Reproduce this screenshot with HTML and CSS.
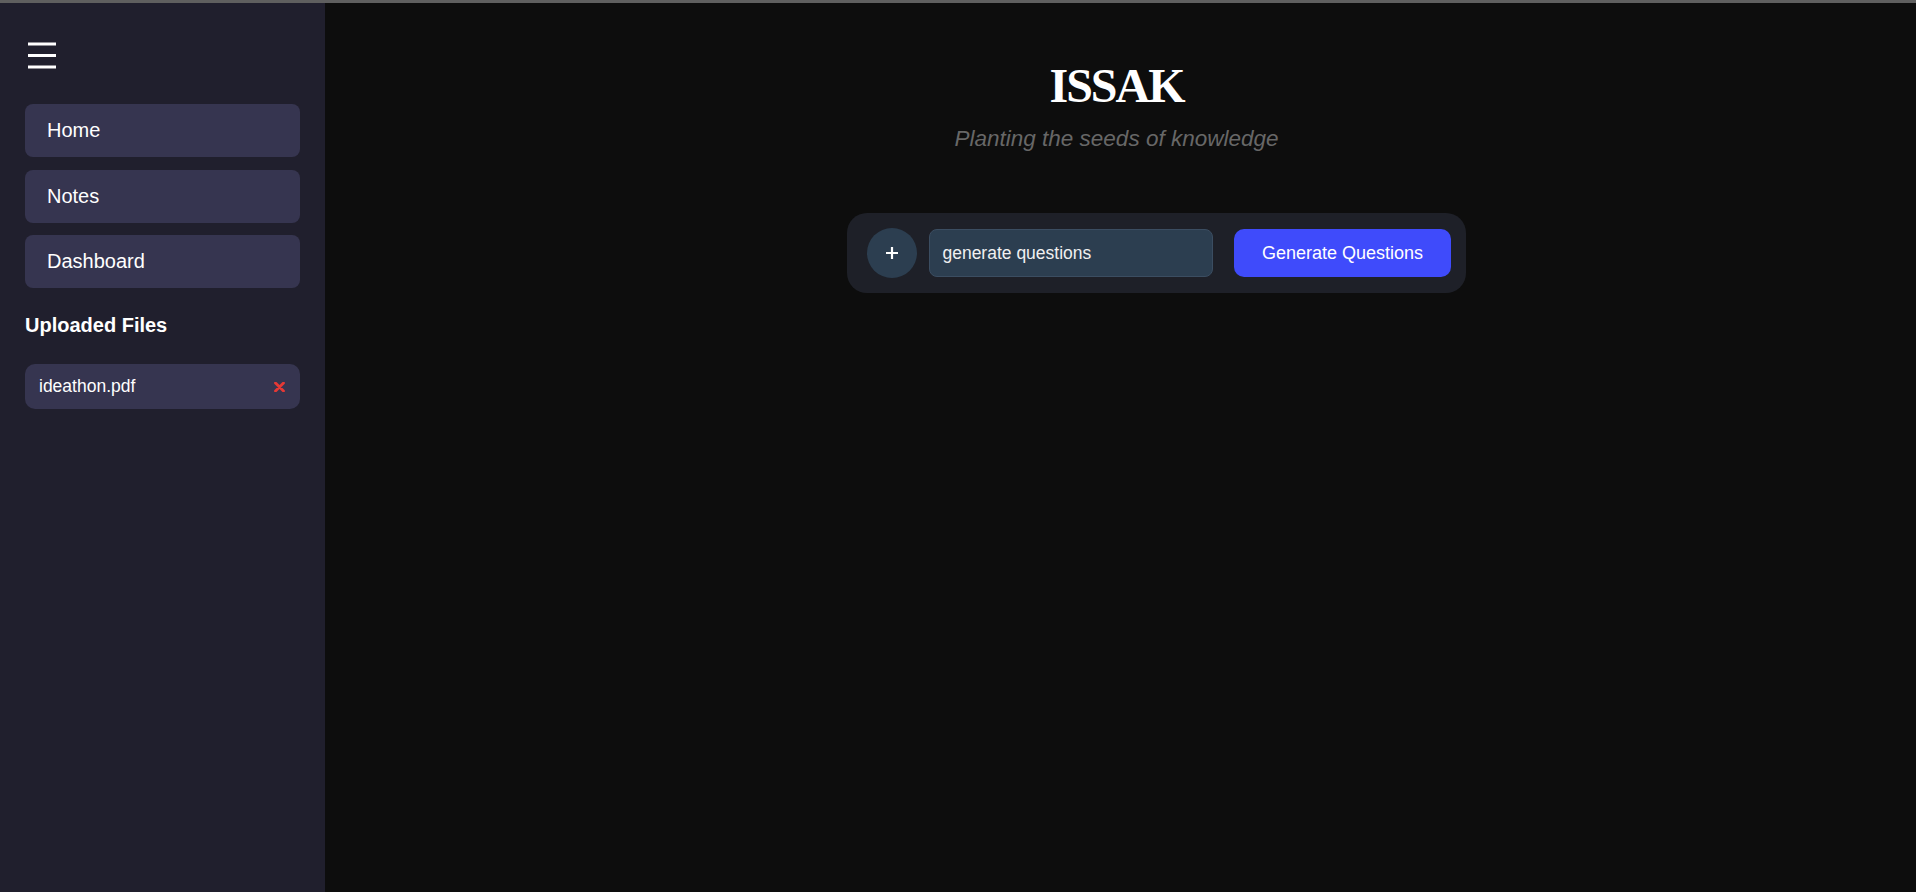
FILE: index.html
```html
<!DOCTYPE html>
<html lang="en">
<head>
<meta charset="utf-8">
<title>ISSAK</title>
<link rel="stylesheet" href="styles.css">
</head>
<body>
<div class="topbar"></div>
<div class="app">
  <aside class="sidebar">
    <button class="menu-btn" aria-label="Menu">
      <svg width="28" height="27" viewBox="0 0 28 27">
        <rect x="0" y="0.5" width="28" height="3" fill="#ffffff"/>
        <rect x="0" y="12" width="28" height="3" fill="#ffffff"/>
        <rect x="0" y="23.5" width="28" height="3" fill="#ffffff"/>
      </svg>
    </button>
    <nav class="nav">
      <a class="nav-item">Home</a>
      <a class="nav-item">Notes</a>
      <a class="nav-item">Dashboard</a>
    </nav>
    <h3 class="files-title">Uploaded Files</h3>
    <ul class="file-list">
      <li class="file-item">
        <span class="file-name">ideathon.pdf</span>
        <svg class="file-remove" width="11" height="10" viewBox="0 0 11 10">
          <path d="M1.5 1 L9.5 9 M9.5 1 L1.5 9" stroke="#e53935" stroke-width="2.8" stroke-linecap="round"/>
        </svg>
      </li>
    </ul>
  </aside>
  <main class="main">
    <h1 class="title">ISSAK</h1>
    <p class="subtitle">Planting the seeds of knowledge</p>
    <div class="prompt">
      <button class="add-btn" aria-label="Add">
        <svg width="14" height="14" viewBox="0 0 14 14">
          <path d="M7 1 V13 M1 7 H13" stroke="#ffffff" stroke-width="2.2"/>
        </svg>
      </button>
      <div class="prompt-input">generate questions</div>
      <button class="gen-btn">Generate Questions</button>
    </div>
  </main>
</div>
</body>
</html>
```

FILE: styles.css
```css
* {
  box-sizing: border-box;
}

html, body {
  margin: 0;
  padding: 0;
  height: 100%;
  background: #0d0d0d;
  font-family: "Liberation Sans", Arial, sans-serif;
  color: #ffffff;
  overflow: hidden;
}

.topbar {
  height: 3px;
  background: #5f5f5f;
}

.app {
  display: flex;
  height: 889px;
}

.sidebar {
  width: 325px;
  flex: 0 0 325px;
  background: #201f2d;
  padding: 39px 25px 0 25px;
  display: flex;
  flex-direction: column;
}

.menu-btn {
  background: none;
  border: none;
  padding: 0;
  margin: 0 0 0 3px;
  width: 28px;
  height: 27px;
  display: block;
}

.menu-btn svg {
  display: block;
}

.nav {
  margin-top: 35px;
  display: flex;
  flex-direction: column;
  gap: 12.5px;
}

.nav-item {
  display: block;
  background: #363550;
  border-radius: 8px;
  padding: 15px 22px;
  font-size: 20px;
  line-height: 23px;
  color: #ffffff;
}

.files-title {
  margin: 26px 0 0 0;
  font-size: 20px;
  line-height: 23px;
  font-weight: bold;
}

.file-list {
  list-style: none;
  margin: 27px 0 0 0;
  padding: 0;
}

.file-item {
  display: flex;
  align-items: center;
  justify-content: space-between;
  background: #363550;
  border-radius: 10px;
  height: 45px;
  padding: 0 15px 0 14px;
  font-size: 17.5px;
}

.file-remove {
  display: block;
}

.main {
  flex: 1;
  display: flex;
  flex-direction: column;
  align-items: center;
  padding: 55px 8px 0 0;
}

.title {
  margin: 0;
  font-family: "Liberation Serif", "Times New Roman", serif;
  font-weight: bold;
  font-size: 48px;
  line-height: 56px;
  letter-spacing: -2px;
  color: #ffffff;
}

.subtitle {
  margin: 12px 0 0 0;
  font-size: 22.5px;
  line-height: 26px;
  font-style: italic;
  color: #676767;
}

.prompt {
  margin: 61px 0 0 80px;
  display: flex;
  align-items: center;
  background: #1e2028;
  border-radius: 20px;
  padding: 15px 15px 15px 20px;
}

.add-btn {
  width: 50px;
  height: 50px;
  border-radius: 50%;
  border: none;
  background: #2c3e50;
  display: flex;
  align-items: center;
  justify-content: center;
  padding: 0;
}

.add-btn svg {
  display: block;
}

.prompt-input {
  margin-left: 12px;
  width: 284px;
  height: 48px;
  background: #2c3e50;
  border: 1px solid #3b4d61;
  border-radius: 8px;
  padding: 0 12px;
  display: flex;
  align-items: center;
  font-size: 17.5px;
  color: #f0f0f0;
}

.gen-btn {
  margin-left: 21px;
  height: 48px;
  padding: 0 27.5px;
  border: none;
  border-radius: 10px;
  background: #3f4bfb;
  color: #ffffff;
  font-family: "Liberation Sans", Arial, sans-serif;
  font-size: 18px;
}
```
